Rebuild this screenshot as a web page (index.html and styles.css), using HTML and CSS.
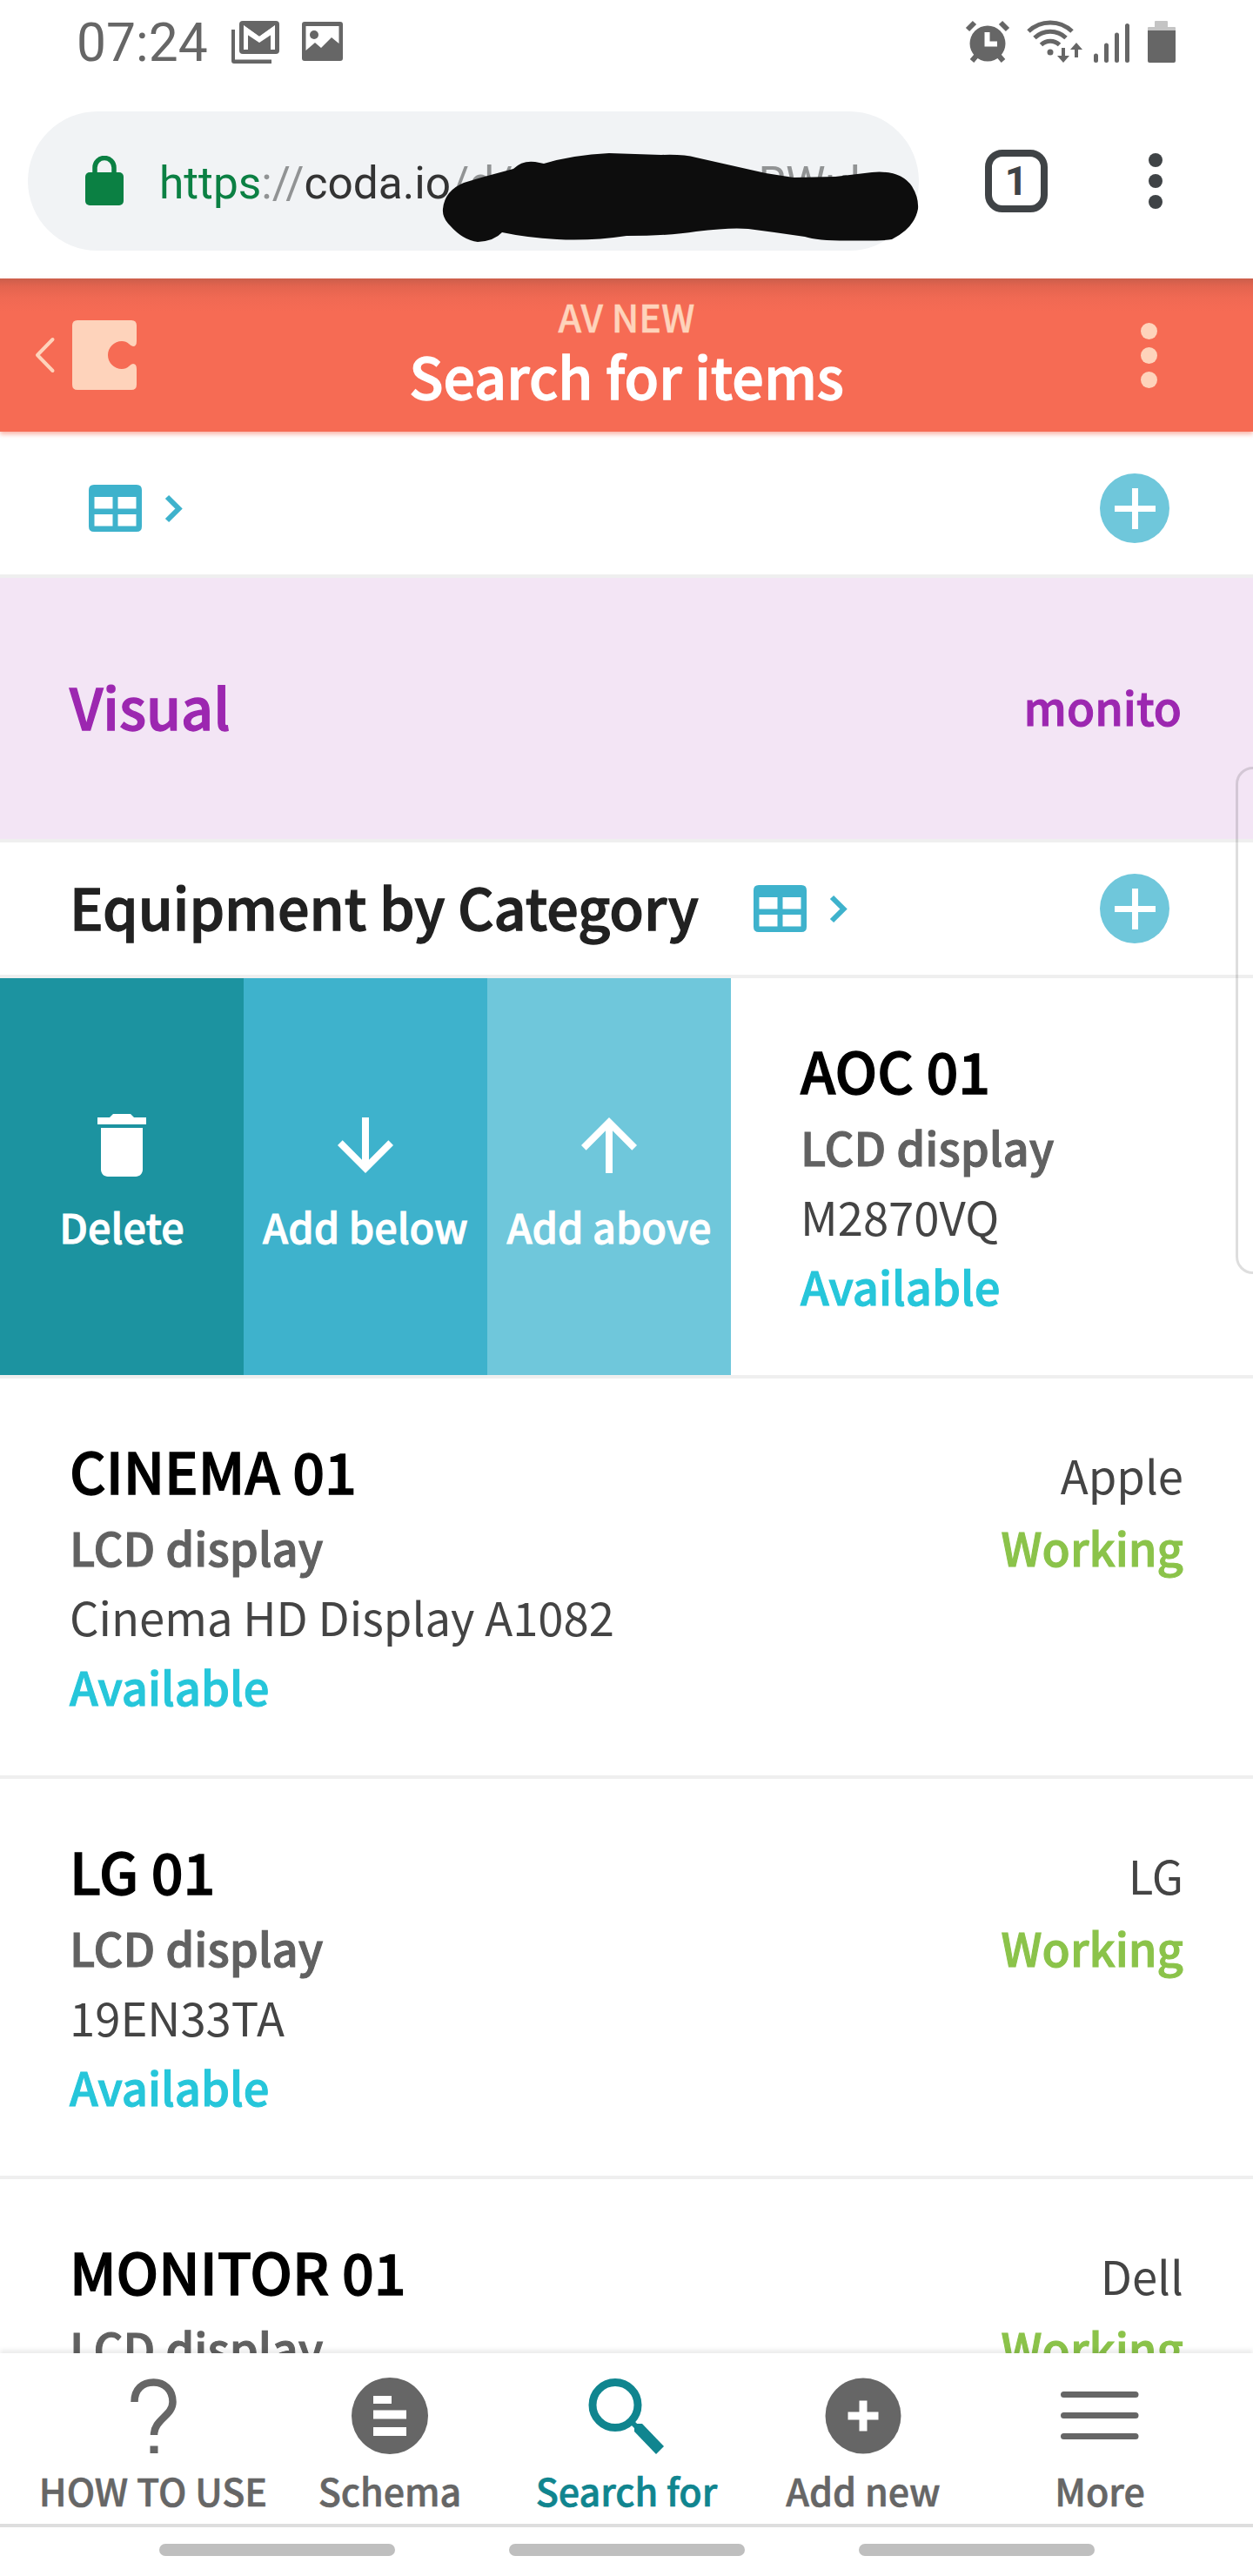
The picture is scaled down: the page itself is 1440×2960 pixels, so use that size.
FILE: index.html
```
<!DOCTYPE html>
<html lang="en">
<head>
    <meta charset="UTF-8">
    <meta name="viewport" content="width=device-width, initial-scale=1.0">
    <title>AV NEW - Search for items</title>
    <link rel="stylesheet" href="styles.css">
</head>
<body>
    <div class="screen">
        <div class="status-bar">
            <span class="time">07:24</span>
            <svg class="status-icons" width="140" height="56" viewBox="0 0 140 56" fill="#666">
                <path d="M4 14v36q0 3 3 3h43v-4.500H8V14z"/>
                <rect x="13" y="4" width="46" height="38" rx="4"/>
                <path d="M20.500 37V14L36 25l15.500-11v23" fill="none" stroke="#fff" stroke-width="5"/>
                <path d="M18 9l18 13L54 9v8L36 29 18 17z" fill="#fff"/>
                <path fill-rule="evenodd" d="M88 5h41q3 0 3 3v39q0 3-3 3H88q-3 0-3-3V8q0-3 3-3zm1.500 5v28L100 29l7 6 12-12 8.500 7V10z"/>
                <circle cx="99" cy="20" r="5"/>
            </svg>
            <svg class="status-icons right" width="246" height="56" viewBox="0 0 246 56" fill="#666">
                <circle cx="30" cy="30" r="20.500"/>
                <path d="M7 14l8-8M53 14l-8-8M12 50l6-7M48 50l-6-7" stroke="#666" stroke-width="6"/>
                <path d="M29.500 17v13.500H41" fill="none" stroke="#fff" stroke-width="6"/>
                <g fill="none" stroke="#666" stroke-width="5">
                    <path d="M77 16a36 36 0 0 1 50 0M84 23.500a26 26 0 0 1 36 0M91.500 31.500a15 15 0 0 1 21 0"/>
                    <path d="M117 35v14M132 46V32" stroke-width="4"/>
                </g>
                <circle cx="102" cy="40" r="3.500"/>
                <path d="M110 44h14l-7 8zM125 37h14l-7-8z"/>
                <path d="M154.500 44v5.500M166.500 32v17.500M178.500 20v29.500M190.500 9.500v40" stroke="#666" stroke-width="5" stroke-linecap="round"/>
                <path d="M214 15v-3q0-1 1-1h7V5q0-1 1-1h13q1 0 1 1v6h8q1 0 1 1v3z" fill="#c4c4c4"/>
                <path d="M214 15h32v35q0 2-2 2h-28q-2 0-2-2z"/>
            </svg>
        </div>

        <div class="browser-bar">
            <div class="url-pill">
                <svg width="44" height="58" viewBox="0 0 44 58">
                    <rect x="0" y="19" width="44" height="38" rx="5" fill="#0b8043"/>
                    <path d="M11 22v-8.500a11 11 0 0 1 22 0V22" fill="none" stroke="#0b8043" stroke-width="5.500"/>
                </svg>
                <div class="url"><span class="secure">https</span><span class="muted">://</span>coda.io<span class="muted">/d/<span class="tail">RWul</span></span></div>
                <svg class="redaction" width="560" height="116" viewBox="504 168 560 116">
                    <path d="M509 240Q511 219 533 210L553 204 590 194Q600 184 615 186L625 188Q658 178 700 176L760 178Q785 177 800 181L840 190 880 199 912 204 960 203 1002 198Q1035 195 1048 214 1056 227 1055 240 1051 262 1025 275 1015 277 980 276.500 940 277 925 272L890 267 860 263Q840 261 800 266 770 271 720 271 680 277 640 275 605 273 577 267 568 277 549 278 532 276 517 259 508 250 509 240z" fill="#0d0d0d"/>
                </svg>
            </div>
            <div class="tab-count">1</div>
            <div class="dots dark"><i></i><i></i><i></i></div>
        </div>

        <header class="app-header">
            <svg class="home" width="120" height="80" viewBox="0 0 120 80">
                <path d="M20.500 22L3 40l17.500 18" fill="none" stroke="#fed3bb" stroke-width="4" stroke-linecap="round" stroke-linejoin="round"/>
                <path d="M49 0h62q6 0 6 6v18q0 6-4 6-2 0-5-3-3-3-8-3a16 16 0 0 0 0 32q5 0 8-3 3-3 5-3 4 0 4 6v18q0 6-6 6H49q-6 0-6-6V6q0-6 6-6z" fill="#fed3bb"/>
            </svg>
            <div class="titles">
                <div class="doc-name">AV NEW</div>
                <h1>Search for items</h1>
            </div>
            <div class="dots light"><i></i><i></i><i></i></div>
        </header>

        <main class="content">
            <div class="section-bar first">
                <svg class="table-link" width="110" height="56" viewBox="0 0 110 56">
                    <path fill-rule="evenodd" d="M6 1h49q6 0 6 6v42q0 6-6 6H6q-6 0-6-6V7q0-6 6-6zm.500 14v13.500h21V15zm27 0v13.500h21V15zm-27 20v13.500h21V35zm27 0v13.500h21V35z" fill="#3eb2cc"/>
                    <path d="M90 15l13.500 13.500L90 42" fill="none" stroke="#3eb2cc" stroke-width="6"/>
                </svg>
                <div class="add-btn"></div>
            </div>

            <div class="filter-row">
                <span class="filter-name">Visual</span>
                <span class="filter-value">monito</span>
            </div>

            <div class="section-bar">
                <h2>Equipment by Category</h2>
                <svg class="table-link" width="110" height="56" viewBox="0 0 110 56">
                    <path fill-rule="evenodd" d="M6 1h49q6 0 6 6v42q0 6-6 6H6q-6 0-6-6V7q0-6 6-6zm.500 14v13.500h21V15zm27 0v13.500h21V15zm-27 20v13.500h21V35zm27 0v13.500h21V35z" fill="#3eb2cc"/>
                    <path d="M90 15l13.500 13.500L90 42" fill="none" stroke="#3eb2cc" stroke-width="6"/>
                </svg>
                <div class="add-btn"></div>
            </div>

            <div class="item swiped">
                <div class="action delete">
                    <svg width="96" height="96" viewBox="0 0 24 24" fill="#fff"><path d="M6 19c0 1.100.9 2 2 2h8c1.100 0 2-.9 2-2V7H6v12zM19 4h-3.500l-1-1h-5l-1 1H5v2h14V4z"/></svg>
                    <span>Delete</span>
                </div>
                <div class="action below">
                    <svg width="96" height="96" viewBox="0 0 24 24" fill="#fff"><path d="M20 12l-1.410-1.410L13 16.170V4h-2v12.170l-5.580-5.590L4 12l8 8 8-8z"/></svg>
                    <span>Add below</span>
                </div>
                <div class="action above">
                    <svg width="96" height="96" viewBox="0 0 24 24" fill="#fff"><path d="M4 12l1.410 1.410L11 7.830V20h2V7.830l5.580 5.590L20 12l-8-8-8 8z"/></svg>
                    <span>Add above</span>
                </div>
                <div class="info">
                    <h3>AOC 01</h3>
                    <div class="type">LCD display</div>
                    <div class="model">M2870VQ</div>
                    <div class="available">Available</div>
                </div>
            </div>

            <div class="item">
                <div class="info">
                    <h3>CINEMA 01</h3>
                    <div class="type">LCD display</div>
                    <div class="model">Cinema HD Display A1082</div>
                    <div class="available">Available</div>
                </div>
                <div class="side">
                    <div class="brand">Apple</div>
                    <div class="working">Working</div>
                </div>
            </div>

            <div class="item">
                <div class="info">
                    <h3>LG 01</h3>
                    <div class="type">LCD display</div>
                    <div class="model">19EN33TA</div>
                    <div class="available">Available</div>
                </div>
                <div class="side">
                    <div class="brand">LG</div>
                    <div class="working">Working</div>
                </div>
            </div>

            <div class="item">
                <div class="info">
                    <h3>MONITOR 01</h3>
                    <div class="type">LCD display</div>
                </div>
                <div class="side">
                    <div class="brand">Dell</div>
                    <div class="working">Working</div>
                </div>
            </div>
        </main>

        <nav class="bottom-nav">
            <div class="nav-item">
                <svg width="96" height="96" viewBox="0 0 96 96">
                    <path d="M26.500 32C26.500 17 36 9.500 48.500 9.500S70.500 18 70.500 32C70.500 48 49 52 49 70" fill="none" stroke="#666" stroke-width="8.500"/>
                    <rect x="44.500" y="82.500" width="9" height="8.500" fill="#666"/>
                </svg>
                <span>HOW TO USE</span>
            </div>
            <div class="nav-item">
                <svg width="96" height="96" viewBox="0 0 96 96">
                    <circle cx="48" cy="48" r="44" fill="#666"/>
                    <path d="M29 25h21v9H29zM29 41.500h38v10H29zM29 61h38v10H29z" fill="#fff"/>
                </svg>
                <span>Schema</span>
            </div>
            <div class="nav-item active">
                <svg width="96" height="96" viewBox="0 0 96 96">
                    <circle cx="35" cy="35.500" r="26" fill="none" stroke="#10858f" stroke-width="9"/>
                    <path d="M53 54l6 6" stroke="#10858f" stroke-width="6"/>
                    <path d="M57 57h9l25 26-9 9-25-26z" fill="#10858f"/>
                </svg>
                <span>Search for</span>
            </div>
            <div class="nav-item">
                <svg width="96" height="96" viewBox="0 0 96 96">
                    <circle cx="48" cy="48" r="43.500" fill="#666"/>
                    <path d="M48 30.500v35M30.500 48h35" stroke="#fff" stroke-width="9"/>
                </svg>
                <span>Add new</span>
            </div>
            <div class="nav-item">
                <svg width="96" height="96" viewBox="0 0 96 96">
                    <path d="M6.500 23.500h82.500M6.500 47.500h82.500M6.500 71.500h82.500" stroke="#666" stroke-width="7" stroke-linecap="round"/>
                </svg>
                <span>More</span>
            </div>
        </nav>

        <div class="gesture-bar"><i></i><i></i><i></i></div>
        <div class="edge-handle"></div>
    </div>
</body>
</html>
```
FILE: styles.css
```
* {
    box-sizing: border-box;
}
body {
    margin: 0;
    background: #fff;
    font-family: "Noto Sans CJK JP", "Noto Sans", sans-serif;
    color: #444;
}
h1, h2, h3 {
    margin: 0;
    font-weight: 500;
}
/* semibold: medium weight with a thin outline */
h1, h2, h3, .filter-row span, .type, .available, .working, .action span {
    -webkit-text-stroke: 0.02em currentColor;
}
svg {
    display: block;
    flex-shrink: 0;
}
.screen {
    position: relative;
    width: 1440px;
    height: 2960px;
    overflow: hidden;
    display: flex;
    flex-direction: column;
}

/* Phone status bar */
.status-bar {
    height: 100px;
    padding: 20px 89px 0 88px;
    display: flex;
    align-items: flex-start;
    font-family: Roboto, sans-serif;
    color: #666;
}
.time {
    width: 174px;
    font-size: 60.5px;
    line-height: 60px;
}
.status-icons.right {
    margin-left: auto;
}

/* Browser bar */
.browser-bar {
    height: 220px;
    padding: 28px 104px 0 32px;
    display: flex;
    align-items: flex-start;
    font-family: Roboto, sans-serif;
}
.url-pill {
    position: relative;
    width: 1024px;
    height: 160px;
    padding-left: 66px;
    border-radius: 80px;
    background: #f1f3f5;
    display: flex;
    align-items: center;
}
.url {
    margin-left: 41px;
    padding-top: 5px;
    font-size: 51.4px;
    line-height: 60px;
    color: #333;
    white-space: nowrap;
}
.secure {
    color: #0b8043;
}
.muted {
    color: #919394;
}
.tail {
    margin-left: 282px;
}
.redaction {
    position: absolute;
    left: 472px;
    top: 40px;
}
.tab-count {
    width: 72px;
    height: 72px;
    margin: 44px 0 0 76px;
    border: 8px solid #3f4346;
    border-radius: 20px;
    font-size: 46px;
    font-weight: 700;
    line-height: 56px;
    text-align: center;
    color: #3f4346;
}
.dots {
    display: flex;
    flex-direction: column;
}
.dots i {
    border-radius: 50%;
}
.dots.dark {
    margin: 48px 0 0 auto;
    gap: 8px;
}
.dots.dark i {
    width: 16px;
    height: 16px;
    background: #3f4346;
}
.dots.light {
    justify-self: end;
    margin-right: 70px;
    gap: 9px;
}
.dots.light i {
    width: 19px;
    height: 19px;
    background: #fed3bb;
}

/* Document header */
.app-header {
    position: relative;
    height: 176px;
    padding: 0 40px;
    display: grid;
    grid-template-columns: 1fr auto 1fr;
    align-items: center;
    background: linear-gradient(#cb5e4b 0, #e3644f 9px, #f06953 22px, #f66b54 38px);
    box-shadow: 0 3px 5px rgba(246, 107, 84, 0.5);
    z-index: 1;
}
.titles {
    padding-bottom: 10px;
    text-align: center;
    color: #fff;
}
.doc-name {
    font-size: 43px;
    line-height: 56px;
    color: #fed3bb;
    font-weight: 500;
    -webkit-text-stroke: 0.01em currentColor;
}
.titles h1 {
    font-size: 64.6px;
    line-height: 80px;
}

/* Page content */
.content {
    flex: 1;
    min-height: 0;
    overflow: hidden;
}
.section-bar {
    height: 156px;
    padding: 0 96px 0 80px;
    border-bottom: 4px solid #efefef;
    display: flex;
    align-items: center;
}
.section-bar.first {
    height: 168px;
    padding-left: 102px;
    padding-top: 12px;
}
.section-bar h2 {
    width: 786px;
    padding-bottom: 6px;
    font-size: 64.6px;
    line-height: 80px;
    color: #212121;
}
.add-btn {
    width: 80px;
    height: 80px;
    margin-left: auto;
    border-radius: 50%;
    background:
        linear-gradient(#fff, #fff) center / 47px 7px no-repeat,
        linear-gradient(#fff, #fff) center / 7px 47px no-repeat,
        #6fc7db;
}
.filter-row {
    height: 304px;
    padding: 0 82px 6px 80px;
    border-bottom: 4px solid #efefef;
    background: #f3e5f5;
    color: #9c27b0;
    display: flex;
    align-items: center;
    justify-content: space-between;
    font-weight: 500;
}
.filter-name {
    font-size: 64.6px;
    line-height: 80px;
}
.filter-value {
    font-size: 52.4px;
    line-height: 80px;
}

/* Equipment rows */
.item {
    height: 460px;
    padding: 0 80px;
    border-bottom: 4px solid #efefef;
    display: flex;
    justify-content: space-between;
    font-size: 52.6px;
    line-height: 80px;
}
.item.swiped {
    padding: 0;
    justify-content: flex-start;
}
.info {
    padding-top: 61px;
}
.swiped .info {
    padding-left: 80px;
}
.item h3 {
    margin-bottom: 4px;
    font-size: 64.6px;
    line-height: 88px;
    color: #000;
}
.type {
    font-weight: 500;
    color: #616161;
}
.model, .brand {
    font-weight: 400;
    color: #444;
}
.available {
    font-weight: 500;
    color: #26c6da;
}
.side {
    padding-top: 70px;
    text-align: right;
}
.working {
    margin-top: 3px;
    font-weight: 500;
    color: #8bc34a;
}
.action {
    width: 280px;
    padding-top: 144px;
    display: flex;
    flex-direction: column;
    align-items: center;
    color: #fff;
    font-size: 46.8px;
    font-weight: 500;
    line-height: 64px;
}
.action span {
    margin-top: 13px;
}
.delete {
    background: #1c93a0;
}
.below {
    background: #3eb2cc;
}
.above {
    background: #6fc7db;
}

/* Bottom navigation */
.bottom-nav {
    position: relative;
    height: 200px;
    padding: 24px 40px 0;
    border-bottom: 4px solid #dedede;
    background: #fff;
    box-shadow: 0 -4px 5px rgba(0, 0, 0, 0.08);
    display: flex;
}
.nav-item {
    width: 272px;
    display: flex;
    flex-direction: column;
    align-items: center;
    color: #666;
    font-size: 43px;
    font-weight: 500;
    line-height: 56px;
    white-space: nowrap;
    -webkit-text-stroke: 0.014em currentColor;
}
.nav-item span {
    margin-top: 9px;
}
.nav-item.active {
    color: #10858f;
}
.nav-item.active span {
    -webkit-text-stroke: 0.016em #10858f;
}
.gesture-bar {
    height: 56px;
    padding-top: 19px;
    background: #fff;
    display: flex;
    justify-content: center;
    gap: 131px;
}
.gesture-bar i {
    width: 271px;
    height: 14px;
    border-radius: 7px;
    background: #bfbfbf;
}

/* Edge panel handle */
.edge-handle {
    position: absolute;
    left: 1420px;
    top: 881px;
    width: 40px;
    height: 583px;
    border: 3px solid rgba(0, 0, 0, 0.13);
    border-radius: 22px;
}
```
